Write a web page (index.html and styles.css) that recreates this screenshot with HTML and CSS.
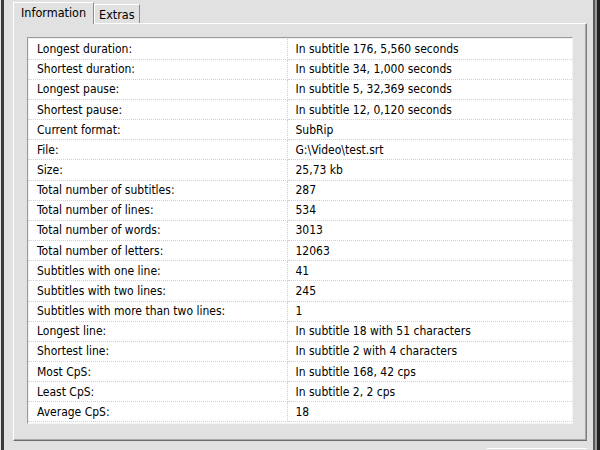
FILE: index.html
```html
<html>
<head>
<title>Statistics</title>
<link rel="stylesheet" href="styles.css">
</head>
<body>
<div class="screen">
	<div class="edge-left"></div>
	<div class="main">
		<div class="tabs">
			<div class="tab active">Information</div>
			<div class="tab">Extras</div>
		</div>
		<div class="panel">
			<div class="list">
				<table class="stats">
					<tr><td class="name">Longest duration:</td><td class="value">In subtitle 176, 5,560 seconds</td></tr>
					<tr><td class="name">Shortest duration:</td><td class="value">In subtitle 34, 1,000 seconds</td></tr>
					<tr><td class="name">Longest pause:</td><td class="value">In subtitle 5, 32,369 seconds</td></tr>
					<tr><td class="name">Shortest pause:</td><td class="value">In subtitle 12, 0,120 seconds</td></tr>
					<tr><td class="name">Current format:</td><td class="value">SubRip</td></tr>
					<tr><td class="name">File:</td><td class="value">G:\Video\test.srt</td></tr>
					<tr><td class="name">Size:</td><td class="value">25,73 kb</td></tr>
					<tr><td class="name">Total number of subtitles:</td><td class="value">287</td></tr>
					<tr><td class="name">Total number of lines:</td><td class="value">534</td></tr>
					<tr><td class="name">Total number of words:</td><td class="value">3013</td></tr>
					<tr><td class="name">Total number of letters:</td><td class="value">12063</td></tr>
					<tr><td class="name">Subtitles with one line:</td><td class="value">41</td></tr>
					<tr><td class="name">Subtitles with two lines:</td><td class="value">245</td></tr>
					<tr><td class="name">Subtitles with more than two lines:</td><td class="value">1</td></tr>
					<tr><td class="name">Longest line:</td><td class="value">In subtitle 18 with 51 characters</td></tr>
					<tr><td class="name">Shortest line:</td><td class="value">In subtitle 2 with 4 characters</td></tr>
					<tr><td class="name">Most CpS:</td><td class="value">In subtitle 168, 42 cps</td></tr>
					<tr><td class="name">Least CpS:</td><td class="value">In subtitle 2, 2 cps</td></tr>
					<tr><td class="name">Average CpS:</td><td class="value">18</td></tr>
				</table>
			</div>
		</div>
		<div class="footer">
			<div class="button"></div>
		</div>
	</div>
	<div class="edge-right"></div>
</div>
</body>
</html>
```

FILE: styles.css
```css
html, body { margin:0; padding:0; }
body { background:#e1e1e1; font-family:"DejaVu Sans Condensed", "DejaVu Sans", sans-serif; font-stretch:condensed; font-size:12px; color:#000; }
.screen { display:flex; width:600px; height:450px; overflow:hidden; }
.edge-left { width:3px; margin-left:1px; background:#3a3a3a; }
.edge-right { width:7px; background:#222; box-shadow:inset 2px 0 #5a5a5a, inset 4px 0 #9a9a9a; }
.main { flex:1; display:flex; flex-direction:column; padding:2px 6px 0 9px; }

.tabs { display:flex; align-items:flex-end; height:21px; position:relative; z-index:1; font-size:12.5px; }
.tab { height:19px; line-height:19px; padding:0 4px 0 4px; border:1px solid #fff; border-bottom:none; border-right:1px solid #8c8c8c; box-sizing:border-box; background:#e1e1e1; }
.tab.active { height:22px; line-height:20px; padding:0 7px 0 7px; margin-bottom:-1px; }

.panel { border-top:1px solid #fff; border-left:1px solid #fff; border-right:1px solid #7f7f7f; border-bottom:1px solid #6f6f6f; box-shadow:inset -1px -1px #a8a8a8; padding:13px 13px 16px 13px; height:387px; }

.list { height:387px; box-sizing:border-box; padding-top:1px; background:#fff; border-top:1px solid #9a9a9a; border-left:1px solid #9a9a9a; border-right:1px solid #f4f4f4; border-bottom:1px solid #f4f4f4; box-shadow:inset 1px 1px #f0f0f0; }
.stats { border-collapse:collapse; width:100%; font-family:"DejaVu Sans Condensed", "DejaVu Sans", sans-serif; font-stretch:condensed; font-size:12px; }
.stats td { height:20.17px; padding:0; border-bottom:1px dotted #d0d0d0; white-space:nowrap; box-sizing:border-box; }
.stats .name { width:259px; padding-left:9px; border-right:1px dotted #d0d0d0; }
.stats .value { padding-left:8px; }

.footer { flex:1; display:flex; justify-content:flex-end; padding-top:7px; }
.button { width:100px; border-top:1px solid #fff; }
```
